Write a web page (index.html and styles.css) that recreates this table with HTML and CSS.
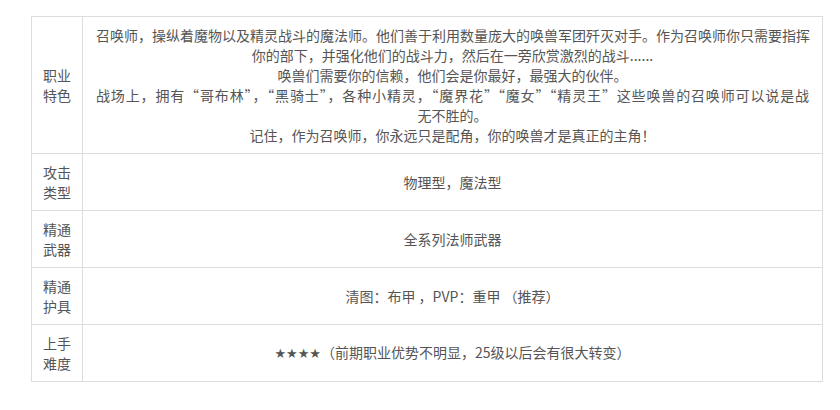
FILE: index.html
```html
<!DOCTYPE html>
<html lang="zh-CN">
<head>
  <meta charset="UTF-8">
  <title>召唤师</title>
  <link rel="stylesheet" href="styles.css">
</head>
<body>
  <div class="page">
    <table class="job-table">
      <colgroup>
        <col class="label-col">
        <col>
      </colgroup>
      <tr>
        <td class="label">职业特色</td>
        <td class="intro">
          <span class="line fill">召唤师，操纵着魔物以及精灵战斗的魔法师。他们善于利用数量庞大的唤兽军团歼灭对手。作为召唤师你只需要指挥</span>
          <span class="line">你的部下，并强化他们的战斗力，然后在一旁欣赏激烈的战斗......</span>
          <span class="line">唤兽们需要你的信赖，他们会是你最好，最强大的伙伴。</span>
          <span class="line fill">战场上，拥有“哥布林”，“黑骑士”，各种小精灵，“魔界花”“魔女”“精灵王”这些唤兽的召唤师可以说是战</span>
          <span class="line">无不胜的。</span>
          <span class="line">记住，作为召唤师，你永远只是配角，你的唤兽才是真正的主角！</span>
        </td>
      </tr>
      <tr>
        <td class="label">攻击类型</td>
        <td>物理型，魔法型</td>
      </tr>
      <tr>
        <td class="label">精通武器</td>
        <td>全系列法师武器</td>
      </tr>
      <tr>
        <td class="label">精通护具</td>
        <td>清图：布甲 ，PVP：重甲 （推荐）</td>
      </tr>
      <tr>
        <td class="label">上手难度</td>
        <td><span class="stars">★★★★</span>（前期职业优势不明显，25级以后会有很大转变）</td>
      </tr>
    </table>
  </div>
</body>
</html>
```

FILE: styles.css
```css
body {
  margin: 0;
  padding: 0;
  background: #ffffff;
  font-family: "Noto Sans CJK SC", "Noto Sans", sans-serif;
  color: #555555;
}

.page {
  padding: 16px 0 0 31px;
}

.job-table {
  width: 792px;
  table-layout: fixed;
  border-collapse: collapse;
  font-size: 14px;
  line-height: 20px;
}

.label-col {
  width: 51px;
}

.job-table td {
  border: 1px solid #dddddd;
  padding: 8px 13px;
  text-align: center;
  vertical-align: middle;
}

.job-table td.label {
  padding: 8px 10px;
}

.line {
  display: block;
  white-space: nowrap;
}

.line.fill {
  text-align: justify;
  text-align-last: justify;
}

.stars {
  font-family: "DejaVu Sans", sans-serif;
  font-size: 13px;
}
```
